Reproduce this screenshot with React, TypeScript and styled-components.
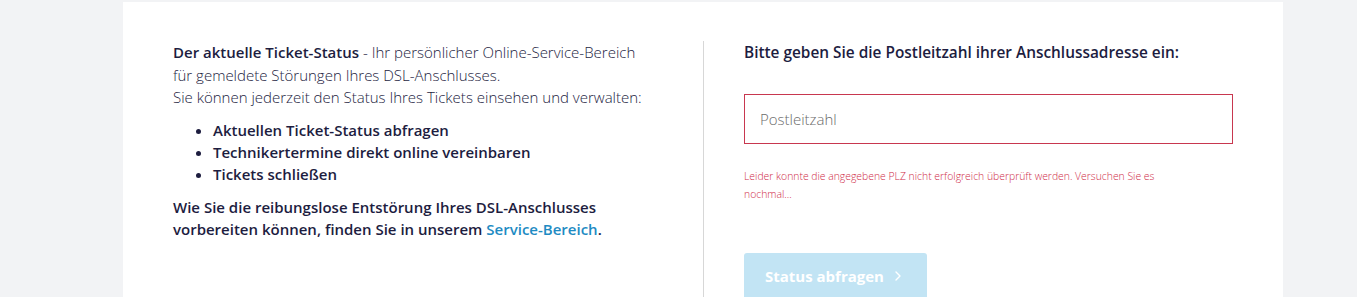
import styled, { createGlobalStyle } from "styled-components";

const GlobalStyle = createGlobalStyle`
  html, body {
    margin: 0;
    padding: 0;
    background: #f2f3f5;
    font-family: "Open Sans", "Noto Sans", sans-serif;
    color: #1d1d3f;
  }
`;

const Page = styled.div`
  padding: 2px 0 0 123px;
  height: 295px;
  overflow: hidden;
`;

const Card = styled.section`
  width: 1160px;
  min-height: 320px;
  box-sizing: border-box;
  background: #fff;
  padding: 39px 50px 0;
  display: grid;
  grid-template-columns: 530px 1fr;
`;

const LeftCol = styled.div`
  padding-right: 52px;
  font-size: 15px;
  line-height: 22.5px;
`;

const RightCol = styled.div`
  border-left: 1px solid #d7d7d7;
  padding-left: 40px;
  min-height: 300px;
`;

const Text = styled.p<{ $bold?: boolean }>`
  margin: 0;
  font-weight: ${(p) => (p.$bold ? 600 : 300)};
`;

const Strong = styled.strong`
  font-weight: 600;
`;

const List = styled.ul`
  margin: 10px 0 11px;
  padding-left: 40px;
  font-weight: 600;
  line-height: 22px;
`;

const Link = styled.a`
  color: #1e8bc3;
  text-decoration: none;
`;

const Heading = styled.h3`
  margin: 0;
  font-size: 15.4px;
  line-height: 24px;
  font-weight: 600;
`;

const Input = styled.input`
  display: block;
  margin-top: 29px;
  width: 100%;
  height: 50px;
  box-sizing: border-box;
  border: 1px solid #c8374f;
  padding: 0 15px;
  font-family: inherit;
  font-size: 15px;
  font-weight: 300;
  color: #1d1d3f;
  outline: none;
  &::placeholder {
    color: #6b6b6b;
  }
`;

const Error = styled.p`
  margin: 23px 0 0;
  max-width: 440px;
  font-size: 10.4px;
  line-height: 18px;
  font-weight: 300;
  color: #cf2b47;
`;

const Button = styled.button`
  margin-top: 50px;
  display: flex;
  align-items: center;
  gap: 10px;
  height: 46px;
  padding: 0 25px 0 21px;
  border: none;
  border-radius: 3px;
  background: #c2e4f4;
  color: #fff;
  font-family: inherit;
  font-size: 15px;
  font-weight: 700;
  cursor: not-allowed;
`;

export default function App() {
  return (
    <>
      <GlobalStyle />
      <Page>
        <Card>
          <LeftCol>
            <Text>
              <Strong>Der aktuelle Ticket-Status</Strong> - Ihr persönlicher
              Online-Service-Bereich für gemeldete Störungen Ihres
              DSL-Anschlusses.
            </Text>
            <Text>
              Sie können jederzeit den Status Ihres Tickets einsehen und
              verwalten:
            </Text>
            <List>
              <li>Aktuellen Ticket-Status abfragen</li>
              <li>Technikertermine direkt online vereinbaren</li>
              <li>Tickets schließen</li>
            </List>
            <Text $bold>
              Wie Sie die reibungslose Entstörung Ihres DSL-Anschlusses
              vorbereiten können, finden Sie in unserem{" "}
              <Link href="#">Service-Bereich</Link>.
            </Text>
          </LeftCol>
          <RightCol>
            <Heading>
              Bitte geben Sie die Postleitzahl ihrer Anschlussadresse ein:
            </Heading>
            <Input placeholder="Postleitzahl" />
            <Error>
              Leider konnte die angegebene PLZ nicht erfolgreich überprüft
              werden. Versuchen Sie es nochmal...
            </Error>
            <Button disabled>
              Status abfragen
              <svg width="8" height="12" viewBox="0 0 8 12" fill="none">
                <path
                  d="M2 2l4 4-4 4"
                  stroke="#fff"
                  strokeWidth="1.4"
                  strokeLinecap="round"
                  strokeLinejoin="round"
                />
              </svg>
            </Button>
          </RightCol>
        </Card>
      </Page>
    </>
  );
}
